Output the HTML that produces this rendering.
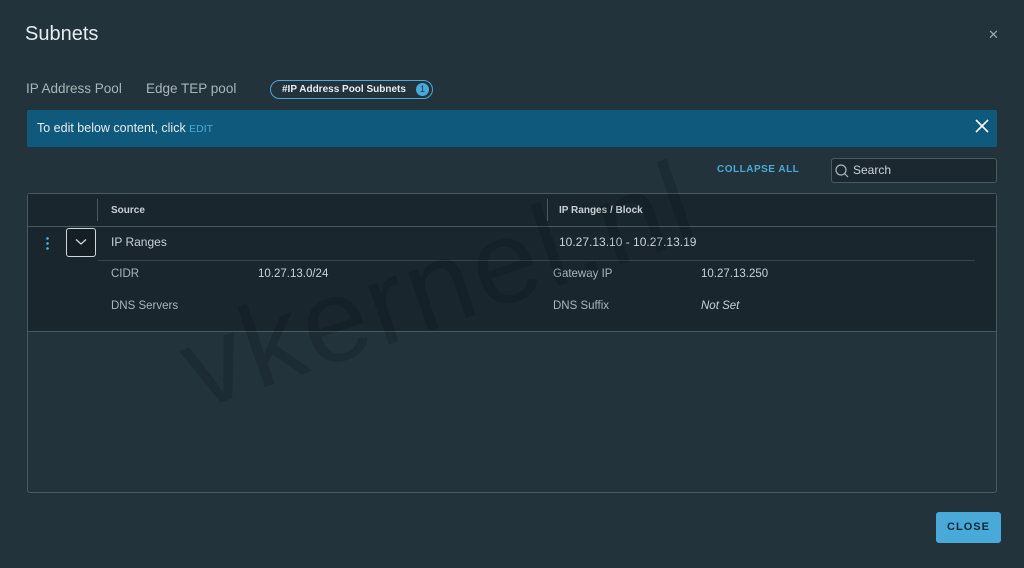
<!DOCTYPE html>
<html><head><style>
*{margin:0;padding:0;box-sizing:border-box}
body{width:1024px;height:568px;background:#22333c;font-family:"Liberation Sans",sans-serif;color:#c9d2d6;position:relative;overflow:hidden}
.a{position:absolute;white-space:nowrap;line-height:1.15}
</style></head><body>
<div class="a" style="left:25px;top:23px;font-size:20px;color:#e6ecef">Subnets</div>
<div class="a" style="left:988px;top:28px;font-size:13px;color:#9aa7ad">✕</div>
<div class="a" style="left:26px;top:81px;font-size:13.5px;color:#aab5ba">IP Address Pool</div>
<div class="a" style="left:146px;top:81px;font-size:13.5px;color:#aab5ba">Edge TEP pool</div>
<div class="a" style="left:270px;top:80px;width:163px;height:19px;border:1.5px solid #49a9d8;border-radius:10px;font-size:10px;font-weight:bold;color:#e6ecef;padding:3px 0 0 11px">#IP Address Pool Subnets<span style="position:absolute;right:3px;top:2px;width:13px;height:13px;border-radius:50%;background:#49a9d8;color:#0f3a52;font-size:9px;text-align:center;line-height:13px;font-weight:normal">1</span></div>
<div class="a" style="left:27px;top:110px;width:970px;height:37px;background:#0f5a7c;border-radius:2px"></div>
<div class="a" style="left:37px;top:121px;font-size:12.5px;color:#e6ecef">To edit below content, click <span style="color:#49a9d8;font-size:10.5px">EDIT</span></div>
<svg class="a" style="left:975px;top:119px" width="14" height="14"><path d="M1 1L13 13M13 1L1 13" stroke="#fff" stroke-width="1.6"/></svg>
<div class="a" style="left:717px;top:164px;font-size:10px;font-weight:bold;color:#49a9d8;letter-spacing:.5px">COLLAPSE ALL</div>
<div class="a" style="left:831px;top:158px;width:166px;height:25px;border:1px solid #4a5a62;border-radius:3px;background:#1b2830"></div>
<svg class="a" style="left:834px;top:163px" width="16" height="16"><circle cx="7" cy="7" r="5" fill="none" stroke="#aab5ba" stroke-width="1.2"/><line x1="10.5" y1="10.5" x2="14" y2="14" stroke="#aab5ba" stroke-width="1.2"/></svg>
<div class="a" style="left:853px;top:164px;font-size:12px;color:#c9d2d6">Search</div>
<div class="a" style="left:27px;top:193px;width:970px;height:300px;border:1px solid #4a5a62;border-radius:3px"></div>
<div class="a" style="left:28px;top:194px;width:968px;height:138px;background:rgba(20,30,37,.6);border-bottom:1px solid #4a5a62"></div>
<div class="a" style="left:28px;top:226px;width:968px;height:1px;background:#4a5a62"></div>
<div class="a" style="left:97px;top:199px;width:1px;height:22px;background:#4a5a62"></div>
<div class="a" style="left:547px;top:199px;width:1px;height:22px;background:#4a5a62"></div>
<div class="a" style="left:111px;top:205px;font-size:10px;font-weight:bold;color:#c9d2d6">Source</div>
<div class="a" style="left:559px;top:205px;font-size:10px;font-weight:bold;color:#c9d2d6">IP Ranges / Block</div>
<div class="a" style="left:46px;top:236px;width:3px;height:15px;background:radial-gradient(circle,#49a9d8 1.2px,transparent 1.5px) 0 0/3px 5px"></div>
<div class="a" style="left:66px;top:228px;width:30px;height:29px;border:1.5px solid #d0d6d9;border-radius:3px;background:#141e24"></div>
<svg class="a" style="left:75px;top:238px" width="12" height="8"><path d="M1 1.5 L6 6 L11 1.5" fill="none" stroke="#d0d6d9" stroke-width="1.3"/></svg>
<div class="a" style="left:111px;top:236px;font-size:12px">IP Ranges</div>
<div class="a" style="left:559px;top:236px;font-size:12px">10.27.13.10 - 10.27.13.19</div>
<div class="a" style="left:98px;top:260px;width:877px;height:1px;background:#35454d"></div>
<div class="a" style="left:111px;top:268px;font-size:11.5px;color:#aab5ba">CIDR</div>
<div class="a" style="left:258px;top:268px;font-size:11.5px">10.27.13.0/24</div>
<div class="a" style="left:553px;top:268px;font-size:11.5px;color:#aab5ba">Gateway IP</div>
<div class="a" style="left:701px;top:268px;font-size:11.5px">10.27.13.250</div>
<div class="a" style="left:111px;top:300px;font-size:11.5px;color:#aab5ba">DNS Servers</div>
<div class="a" style="left:553px;top:300px;font-size:11.5px;color:#aab5ba">DNS Suffix</div>
<div class="a" style="left:701px;top:300px;font-size:11.5px;font-style:italic">Not Set</div>
<div class="a" style="left:205px;top:310px;font-size:118px;color:#000;opacity:.12;transform:rotate(-19deg);transform-origin:left bottom;letter-spacing:3px;line-height:1">vkernel.nl</div>
<div class="a" style="left:936px;top:512px;width:65px;height:31px;background:#49a9d8;border-radius:3px;color:#0f2a38;font-size:11px;font-weight:bold;text-align:center;line-height:31px;letter-spacing:1px">CLOSE</div>
</body></html>
